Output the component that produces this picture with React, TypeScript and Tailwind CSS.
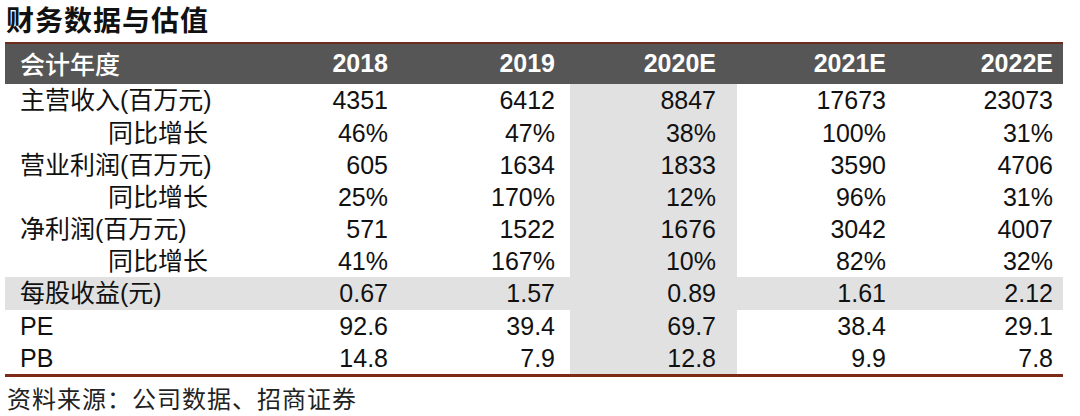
import React from 'react';

type Row = {
  label: string;
  sub?: boolean;
  shaded?: boolean;
  h: string;
  values: string[];
};

const years = ['2018', '2019', '2020E', '2021E', '2022E'];

const rows: Row[] = [
  { label: '主营收入(百万元)', h: 'h-[33px]', values: ['4351', '6412', '8847', '17673', '23073'] },
  { label: '同比增长', sub: true, h: 'h-[32px]', values: ['46%', '47%', '38%', '100%', '31%'] },
  { label: '营业利润(百万元)', h: 'h-[32px]', values: ['605', '1634', '1833', '3590', '4706'] },
  { label: '同比增长', sub: true, h: 'h-[32px]', values: ['25%', '170%', '12%', '96%', '31%'] },
  { label: '净利润(百万元)', h: 'h-[32px]', values: ['571', '1522', '1676', '3042', '4007'] },
  { label: '同比增长', sub: true, h: 'h-[32px]', values: ['41%', '167%', '10%', '82%', '32%'] },
  { label: '每股收益(元)', shaded: true, h: 'h-[33px]', values: ['0.67', '1.57', '0.89', '1.61', '2.12'] },
  { label: 'PE', h: 'h-[32px]', values: ['92.6', '39.4', '69.7', '38.4', '29.1'] },
  { label: 'PB', h: 'h-[32px]', values: ['14.8', '7.9', '12.8', '9.9', '7.8'] },
];

// column widths + right padding so the figures line up with the reference
const cols = [
  'w-[166px] pr-[15px]',
  'w-[167px] pr-[15px]',
  'w-[167px] pr-[21px]',
  'w-[165px] pr-[16px]',
  'w-[161px] pr-[10px]',
];

const cjk = "font-['Liberation_Sans','Noto_Sans_CJK_SC',sans-serif]";

const App: React.FC = () => {
  return (
    <div className={`w-[1080px] h-[416px] bg-white text-[#111] ${cjk} overflow-hidden`}>
      <div className="h-[42px] pl-[6px] pt-[1px]">
        <h1 className="text-[28px] leading-[36px] font-bold font-['Noto_Sans_CJK_SC',sans-serif] tracking-[1px]">
          财务数据与估值
        </h1>
      </div>

      <div className="ml-[5px] w-[1058px]">
        <div className="flex h-[42px] items-center bg-[#565656] border-t-2 border-[#6e2c1c] text-white">
          <div className="w-[232px] pl-[15px] text-[25px] font-['Noto_Sans_CJK_SC',sans-serif] font-medium">会计年度</div>
          {years.map((y, i) => (
            <div key={y} className={`${cols[i]} text-right text-[25px] font-bold`}>
              {y}
            </div>
          ))}
        </div>

        {rows.map((r, ri) => (
          <div key={ri} className={`flex items-center ${r.h} ${r.shaded ? 'bg-[#e1e1e1]' : ''}`}>
            <div className={`w-[232px] whitespace-nowrap text-[25px] leading-none ${r.sub ? 'pl-[103px]' : 'pl-[15px]'}`}>
              {r.label}
            </div>
            {r.values.map((v, i) => (
              <div
                key={i}
                className={`${cols[i]} h-full flex items-center justify-end text-[25px] leading-none ${
                  i === 2 ? 'bg-[#e1e1e1]' : ''
                }`}
              >
                {v}
              </div>
            ))}
          </div>
        ))}

        <div className="h-[3px] bg-[#7d2b17]" />
      </div>

      <div className="pl-[7px] pt-[6px] text-[24px] leading-[30px] text-[#222] font-['Noto_Sans_CJK_SC',sans-serif] tracking-[1px]">
        资料来源：公司数据、招商证券
      </div>
    </div>
  );
};

export default App;
